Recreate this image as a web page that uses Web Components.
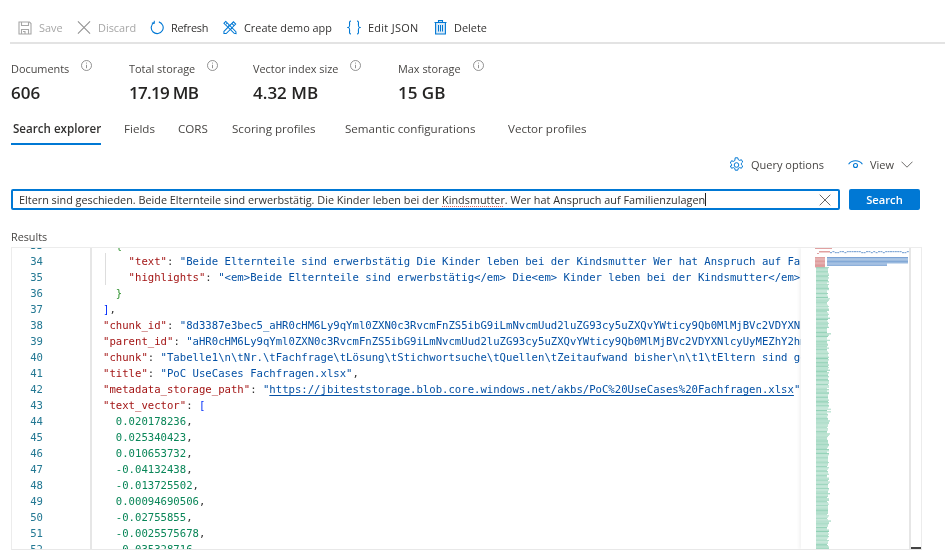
<!DOCTYPE html>
<html lang="de"><head><meta charset="utf-8"><title>Search explorer</title>
<style>
html,body{margin:0;padding:0;background:#fff;overflow:hidden}
body{width:945px;height:552px;font-family:"Open Sans","Noto Sans",sans-serif;color:#323130}
</style></head><body>
<app-shell>
  <tool-bar>
    <tool-button disabled label="Save"><svg viewBox="0 0 14 14" width="14" height="14" fill="none" stroke="#a6a6a6" stroke-width="1.1"><path d="M1 1h10.500L13 2.500V13H1z"/><path d="M3.500 1v3.500h7V1M3.500 13V8.500h7V13"/><path d="M5 10.500h2v2.500" /></svg></tool-button>
    <tool-button disabled label="Discard"><svg viewBox="0 0 15 15" width="15" height="15" fill="none" stroke="#8f8f8f" stroke-width="1.1"><path d="M1 1l13 13M14 1L1 14"/></svg></tool-button>
    <tool-button label="Refresh" style="letter-spacing:-.25px"><svg viewBox="0 0 15 15" width="15" height="15" fill="none" stroke="#0078d4" stroke-width="1.2"><path d="M4.200 2.300A6.400 6.400 0 1 0 9.500 1.500"/><path d="M4.600 .3v2.500H2" stroke-width="1.1"/></svg></tool-button>
    <tool-button label="Create demo app"><svg viewBox="0 0 15 15" width="15" height="15" fill="none" stroke="#0078d4" stroke-width="1.1"><path d="M1 11.600L11.200 1.400l2.400 2.400L3.400 14H1z"/><path d="M9.500 3.200l2.300 2.300"/><path d="M3 1l-2 2 11 10.800 2 .2-.2-2.100z"/><path d="M3.400 4l1.200-1.200M5.600 6.200l1.200-1.200M8.600 9.200l1.200-1.200"/></svg></tool-button>
    <tool-button label="Edit JSON" style="letter-spacing:.3px"><svg viewBox="0 0 14 15" width="14" height="15" fill="none" stroke="#0078d4" stroke-width="1.100"><path d="M4 1C2 1 2.600 3 2.600 5S2.500 7 1 7.500C2.500 8 2.600 8 2.600 10S2 14 4 14"/><path d="M10 1c2 0 1.400 2 1.400 4s.1 2 1.600 2.500C11.500 8 11.400 8 11.400 10S12 14 10 14"/></svg></tool-button>
    <tool-button label="Delete"><svg viewBox="0 0 13 15" width="13" height="15" fill="none" stroke="#0078d4" stroke-width="1.100"><path d="M.5 2.500h12M4.500 2.500V.6h4v1.900"/><path d="M1.600 2.500h9.800V14H1.600z" fill="#dcebf8"/><path d="M4.500 5v6.500M6.500 5v6.500M8.500 5v6.500" stroke-width="1"/></svg></tool-button>
  </tool-bar>
  <stat-row>
    <stat-item label="Documents" value="606"></stat-item>
    <stat-item label="Total storage" value="17.19 MB" tight></stat-item>
    <stat-item label="Vector index size" value="4.32 MB"></stat-item>
    <stat-item label="Max storage" value="15 GB"></stat-item>
  </stat-row>
  <tab-strip>
    <tab-item active>Search explorer</tab-item>
    <tab-item>Fields</tab-item>
    <tab-item>CORS</tab-item>
    <tab-item>Scoring profiles</tab-item>
    <tab-item>Semantic configurations</tab-item>
    <tab-item>Vector profiles</tab-item>
  </tab-strip>
  <option-row></option-row>
  <search-row></search-row>
  <results-label>Results</results-label>
  <json-editor></json-editor>
</app-shell>
<script>
const def=(name,css,html,extra)=>{
  customElements.define(name,class extends HTMLElement{
    constructor(){super();this.attachShadow({mode:'open'}).innerHTML=`<style>${css}</style>`+(typeof html==='function'?'':html)}
    connectedCallback(){ if(typeof html==='function'){const s=document.createElement('div');s.style.display='contents';s.innerHTML=html(this);this.shadowRoot.append(s)} if(extra)extra(this)}
  });
};
def('app-shell',':host{display:block;width:945px;height:552px;overflow:hidden;filter:blur(.4px)}','<slot></slot>');
def('tool-bar',':host{display:grid;grid-template-columns:59px 73px 73px 124px 86px auto;height:44px;margin-left:10px;padding-left:8px;box-sizing:border-box;border-bottom:2px solid #e3e3e3;align-items:center;padding-top:13px}','<slot></slot>');
def('tool-button',':host{display:flex;align-items:center;font-size:10.9px;color:#323130}:host([disabled]){color:#a6a6a6}.i{width:14px;height:15px;display:flex;align-items:center;justify-content:center;margin-right:7px}span{white-space:nowrap}',
  t=>`<div class="i"><slot></slot></div><span>${t.getAttribute('label')}</span>`);
def('stat-row',':host{display:grid;grid-template-columns:118px 124px 145px auto;padding-left:11px;padding-top:16px;height:52px}','<slot></slot>');
const info=`<svg width="11" height="11" viewBox="0 0 11 11" fill="none" stroke="#777" stroke-width=".8"><circle cx="5.500" cy="5.500" r="5"/><path d="M5.500 4.800v3.400M5.500 2.600v1"/></svg>`;
def('stat-item',':host{display:block}.l{display:flex;font-size:10.9px;color:#484644;line-height:18px;white-space:nowrap}.l svg{margin:0 0 0 12px}.v{font-size:17px;font-weight:600;color:#252423;line-height:26px;margin-top:2px;white-space:nowrap}:host([tight]) .v{letter-spacing:-.7px}',
  t=>`<div class="l"><span>${t.getAttribute('label')}</span>${info}</div><div class="v">${t.getAttribute('value')}</div>`);
def('tab-strip',':host{display:grid;grid-template-columns:111px 54px 54px 113px 163px auto;margin-left:11px;height:28px;padding-top:8px;box-sizing:content-box}','<slot></slot>');
def('tab-item',':host{display:block;font-size:11.6px;color:#484644;line-height:18px;white-space:nowrap;padding-left:2px;position:relative}:host([active]){font-weight:600;color:#323130;padding-left:2px}:host([active])::after{content:"";position:absolute;left:0;width:90px;top:23px;height:2px;background:#0078d4}','<slot></slot>');
def('option-row',':host{display:flex;justify-content:flex-end;align-items:center;height:22px;margin-top:5px;padding-right:32px;font-size:11px;color:#484644}div{display:flex;align-items:center;white-space:nowrap}.q{margin-right:24px}.q svg{margin-right:7px}.v svg:first-child{margin-right:7px}.v svg:last-child{margin-left:7px}',
 `<div class="q"><svg width="15" height="15" viewBox="0 0 15 15" fill="none" stroke="#0078d4" stroke-width="1"><path d="M6.200.8h2.600l.4 1.800 1.500.8 1.700-.7 1.300 2.300-1.300 1.200v1.600l1.300 1.200-1.300 2.300-1.700-.7-1.500.8-.4 1.800H6.200l-.4-1.800-1.500-.8-1.700.7-1.300-2.300L2.600 8.800V7.200L1.300 6l1.300-2.300 1.700.7 1.500-.8z"/><circle cx="7.500" cy="8" r="2.300"/></svg>Query options</div>
  <div class="v"><svg width="15" height="11" viewBox="0 0 15 11" fill="none" stroke="#0078d4" stroke-width="1.100"><path d="M.6 5.200C3.800 .6 11.200 .6 14.400 5.200"/><circle cx="7.500" cy="6.500" r="2"/></svg>View<svg width="12" height="7" viewBox="0 0 12 7" fill="none" stroke="#605e5c" stroke-width=".9"><path d="M.5.700L6 6.200 11.500.700"/></svg></div>`);
def('search-row',':host{display:flex;margin:14px 0 0 11px;height:21px}.b{width:829px;box-sizing:border-box;border:2px solid #0078d4;border-radius:2px;display:flex;align-items:center;padding-left:6px;font-size:10.85px;color:#323130;white-space:nowrap;position:relative}.c{width:1px;height:13px;background:#222;margin-left:0}.u{text-decoration:underline dotted #e0605a 1px;text-underline-offset:1.500px}svg{position:absolute;left:806px;top:2.500px}button{all:unset;margin-left:9px;width:71px;height:21px;box-sizing:border-box;background:#0078d4;border-radius:2px;color:#fff;font:600 11.2px "Open Sans","Noto Sans",sans-serif;text-align:center;line-height:21px}',
 `<div class="b"><span>Eltern sind geschieden. Beide Elternteile sind erwerbstätig. Die Kinder leben bei der <span class="u">Kindsmutter</span>. Wer hat Anspruch auf Familienzulagen</span><i class="c"></i><svg width="12" height="12" viewBox="0 0 12 12" fill="none" stroke="#555" stroke-width=".9"><path d="M.7.700l10.600 10.600M11.300.700L.7 11.300"/></svg></div><button>Search</button>`);
def('results-label',':host{display:block;font-size:10.8px;color:#484644;margin:19px 0 0 11px;line-height:16px;height:18px}','<slot></slot>');
const q=s=>`<span class="s">${s}</span>`;const k=s=>`<span class="k">"${s}"</span><span class="p">: </span>`;const n=v=>`  <span class="n">${v}</span><span class="p">,</span>`;
const lines=[
 [33,'  <span class="g">{</span>'],
 [34,'    '+k('text')+q('"Beide Elternteile sind erwerbstätig Die Kinder leben bei der Kindsmutter Wer hat Anspruch auf Fachfrage"')],
 [35,'    '+k('highlights')+q('"&lt;em&gt;Beide Elternteile sind erwerbstätig&lt;/em&gt; Die&lt;em&gt; Kinder leben bei der Kindsmutter&lt;/em&gt; Wer hat"')],
 [36,'  <span class="g">}</span>'],
 [37,'<span class="b">]</span><span class="p">,</span>'],
 [38,k('chunk_id')+q('"8d3387e3bec5_aHR0cHM6Ly9qYml0ZXN0c3RvcmFnZS5ibG9iLmNvcmUud2luZG93cy5uZXQvYWticy9Qb0MlMjBVc2VDYXNlcyUyMEZhY2g"')],
 [39,k('parent_id')+q('"aHR0cHM6Ly9qYml0ZXN0c3RvcmFnZS5ibG9iLmNvcmUud2luZG93cy5uZXQvYWticy9Qb0MlMjBVc2VDYXNlcyUyMEZhY2hmcmFnZW4"')],
 [40,k('chunk')+q('"Tabelle1\\n\\tNr.\\tFachfrage\\tLösung\\tStichwortsuche\\tQuellen\\tZeitaufwand bisher\\n\\t1\\tEltern sind geschieden"')],
 [41,k('title')+q('"PoC UseCases Fachfragen.xlsx"')+'<span class="p">,</span>'],
 [42,k('metadata_storage_path')+'<span class="s">"<u>https://jbiteststorage.blob.core.windows.net/akbs/PoC%20UseCases%20Fachfragen.xlsx</u>"</span><span class="p">,</span>'],
 [43,k('text_vector')+'<span class="b">[</span>'],
 [44,n('0.020178236')],[45,n('0.025340423')],[46,n('0.010653732')],[47,n('-0.04132438')],[48,n('-0.013725502')],
 [49,n('0.00094690506')],[50,n('-0.02755855')],[51,n('-0.0025575678')],[52,n('-0.035328716')]
];
let seed=7;const r=()=>(seed=(seed*16807)%2147483647)/2147483647;
let mm='';
const rect=(x,y,w,h,c,o)=>`<rect x="${x}" y="${y}" width="${w}" height="${h}" fill="${c}" opacity="${o}"/>`;
const RED='#d98a8a',BLUE='#6f9bd0',GRN='#7cc8a8';
[[14,0,17,1],[18,3,11,1.5],[16,5,2,1]].forEach(a=>mm+=rect(a[0],a[1],a[2],a[3],RED,.8));
for(let x=29;x<107;x+=2.400)mm+=rect(x,3+(r()>.5?0:1),2,1.200,BLUE,.85);
for(let y=9;y<19;y+=1.300)mm+=rect(14,y,10,1.300,RED,.75+.2*r());
for(let y=9;y<18;y+=1.300){mm+=rect(26,y,y<15?81:60,1.200,BLUE,.75+.2*r())}
for(let y=19;y<305;y+=1.300)mm+=rect(15,y,11+Math.round(r()*2)+(r()>.9?2:0),1.100,GRN,.55+.3*r());
def('json-editor',`:host{display:flex;margin-left:11px;width:911px;height:303px;box-sizing:border-box;border:1px solid #ececec;border-bottom:1px solid #e8e8e8;overflow:hidden}
.g0{width:78px;border-right:2px solid #e6e6e6;flex:none;overflow:hidden;font:10.63px/16px "DejaVu Sans Mono",monospace;color:#237893}
.g0 div{text-align:right;height:16px}.g0 .inner div{padding-right:47px}
.c{flex:1;min-width:0;overflow:hidden;font:10.63px/16px "DejaVu Sans Mono",monospace;padding-left:11px;position:relative;white-space:pre;color:#222}
.c div{height:16px}.wrap,.g0 .inner{margin-top:-10px}.s{color:#0451a5}.k{color:#a31515}.n{color:#098658}.p{color:#333}.g{color:#319331}.b{color:#0431fa}u{text-decoration-thickness:1px;text-underline-offset:2px}
.ig{position:absolute;left:13px;top:5px;width:1px;height:32px;background:#ddd}
.m{width:108px;flex:none;box-shadow:-2px 0 3px rgba(0,0,0,.05);position:relative;z-index:1;background:#fff}.m svg{display:block}
.sb{width:10px;flex:none;border-left:2px solid #e6e6e6;box-sizing:content-box;position:relative;z-index:1;background:#fff}.sb i{position:absolute;left:0;right:0;bottom:0;height:2px;background:#444}`,
`<div class="g0"><div class="inner">${lines.map(l=>`<div>${l[0]}</div>`).join('')}</div></div>
 <div class="c"><i class="ig"></i><div class="wrap">${lines.map(l=>`<div>${l[1]}</div>`).join('')}</div></div>
 <div class="m"><svg width="108" height="303">${mm}</svg></div><div class="sb"><i></i></div>`);
</script>
</body></html>
